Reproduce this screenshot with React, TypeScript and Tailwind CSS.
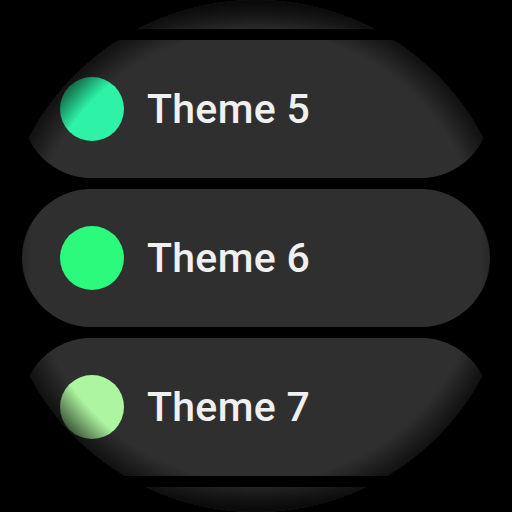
import React from 'react'

interface ThemeItem {
  id: number
  name: string
  color: string
}

const THEMES: ThemeItem[] = [
  { id: 4, name: 'Theme 4', color: '#3ddbd9' },
  { id: 5, name: 'Theme 5', color: '#2ef3a6' },
  { id: 6, name: 'Theme 6', color: '#2cfa7c' },
  { id: 7, name: 'Theme 7', color: '#adf5a0' },
  { id: 8, name: 'Theme 8', color: '#d6f5a0' },
]

const ThemeChip = ({ item }: { item: ThemeItem }) => (
  <div className="mx-[22px] flex h-[138px] shrink-0 items-center rounded-full bg-[#302f2f] pl-[38px]">
    <span
      className="h-16 w-16 shrink-0 rounded-full"
      style={{ backgroundColor: item.color }}
    />
    <span className="ml-[23px] text-[41px] font-medium leading-none tracking-[0.3px] text-[#f0f0f0]">
      {item.name}
    </span>
  </div>
)

export default function App() {
  return (
    <div
      className="h-[512px] w-[512px] bg-black"
      style={{ fontFamily: 'Roboto, "Noto Sans", sans-serif' }}
    >
      <div className="relative h-[512px] w-[512px] overflow-hidden rounded-full bg-black">
        <div className="-mt-[109px] flex flex-col gap-[11px]">
          {THEMES.map((item) => (
            <ThemeChip key={item.id} item={item} />
          ))}
        </div>
        {/* vignette */}
        <div className="pointer-events-none absolute inset-0 rounded-full bg-[radial-gradient(circle_closest-side,transparent_88%,rgba(0,0,0,0.65)_100%)]" />
        <div className="pointer-events-none absolute inset-x-0 top-0 h-[34px] bg-gradient-to-b from-black/50 to-transparent" />
        <div className="pointer-events-none absolute inset-x-0 bottom-0 h-[34px] bg-gradient-to-t from-black/50 to-transparent" />
      </div>
    </div>
  )
}
